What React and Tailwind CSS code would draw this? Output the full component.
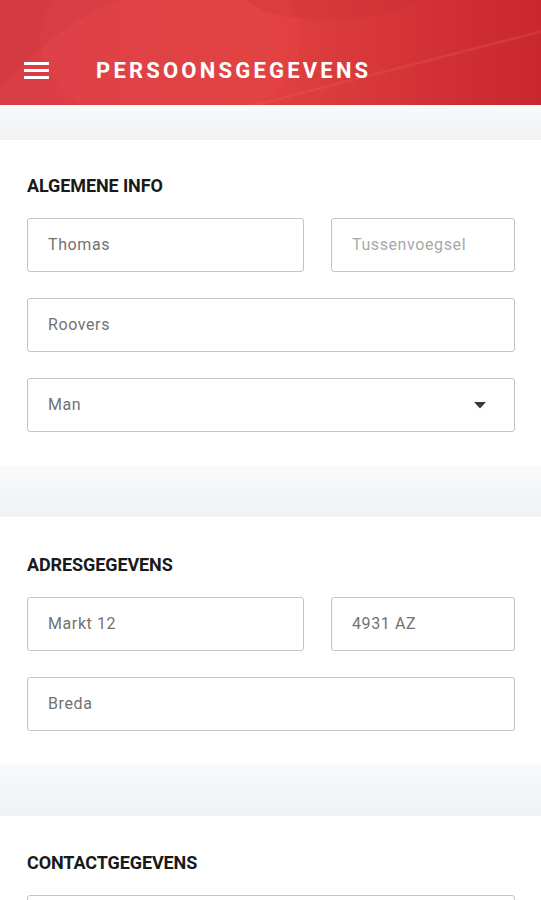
import React from 'react';

const Field = ({ value, placeholder, className = '', select = false }) => (
    <div
        className={`h-[54px] flex items-center justify-between rounded-[3px] border border-[#c4c4c4] bg-white pl-[20px] pr-[28px] ${className}`}
    >
        <span
            className={`text-[16px] tracking-[0.6px] ${value ? 'text-[#727272]' : 'text-[#a9a9a9]'}`}
        >
            {value || placeholder}
        </span>
        {select && (
            <svg width="12" height="7" viewBox="0 0 12 7">
                <path d="M0 0h12L6 6.5z" fill="#3a3a3a" />
            </svg>
        )}
    </div>
);

const Card = ({ title, children, top = 'pt-[34px]' }) => (
    <section className={`bg-white pl-[27px] pr-[26px] ${top} pb-[33px]`}>
        <h2 className="text-[18px] leading-[24px] font-bold text-[#1a1a1a] tracking-[-0.1px] mb-[20px]">
            {title}
        </h2>
        <div className="flex flex-col gap-[26px]">{children}</div>
    </section>
);

const Gap = ({ h }) => (
    <div className={`${h} bg-gradient-to-b from-[#f9fafb] to-[#eff1f3]`} />
);

export default function App() {
    return (
        <div className="w-[541px] h-[900px] overflow-hidden bg-white font-['Roboto',sans-serif]">
            <header className="relative h-[105px] overflow-hidden bg-gradient-to-r from-[#d93d45] via-[#e0403f] to-[#c8272e]">
                <svg className="absolute inset-0" width="541" height="105" viewBox="0 0 541 105">
                    <ellipse cx="170" cy="40" rx="130" ry="90" fill="#ef5a55" opacity="0.15" />
                    <ellipse cx="330" cy="-10" rx="90" ry="30" fill="#c42a33" opacity="0.2" />
                    <path d="M250 105 L541 30 L541 33 L260 105z" fill="#f07070" opacity="0.2" />
                    <path d="M0 90 Q60 20 120 0 L0 0z" fill="#c4303a" opacity="0.2" />
                </svg>
                <div className="relative flex items-center h-full pt-[36px]">
                    <div className="ml-[24px] flex flex-col gap-[4px]">
                        <span className="block w-[25px] h-[3px] bg-white" />
                        <span className="block w-[25px] h-[3px] bg-white" />
                        <span className="block w-[25px] h-[3px] bg-white" />
                    </div>
                    <h1 className="ml-[47px] text-white text-[22px] font-bold tracking-[3.2px]">
                        PERSOONSGEGEVENS
                    </h1>
                </div>
            </header>
            <Gap h="h-[35px]" />
            <Card title="ALGEMENE INFO">
                <div className="flex gap-[27px]">
                    <Field value="Thomas" className="w-[277px]" />
                    <Field placeholder="Tussenvoegsel" className="flex-1" />
                </div>
                <Field value="Roovers" />
                <Field value="Man" select />
            </Card>
            <Gap h="h-[52px]" />
            <Card title="ADRESGEGEVENS" top="pt-[36px]">
                <div className="flex gap-[27px]">
                    <Field value="Markt 12" className="w-[277px]" />
                    <Field value="4931 AZ" className="flex-1" />
                </div>
                <Field value="Breda" />
            </Card>
            <Gap h="h-[52px]" />
            <Card title="CONTACTGEGEVENS" top="pt-[35px]">
                <Field value="" placeholder="" />
            </Card>
        </div>
    );
}
